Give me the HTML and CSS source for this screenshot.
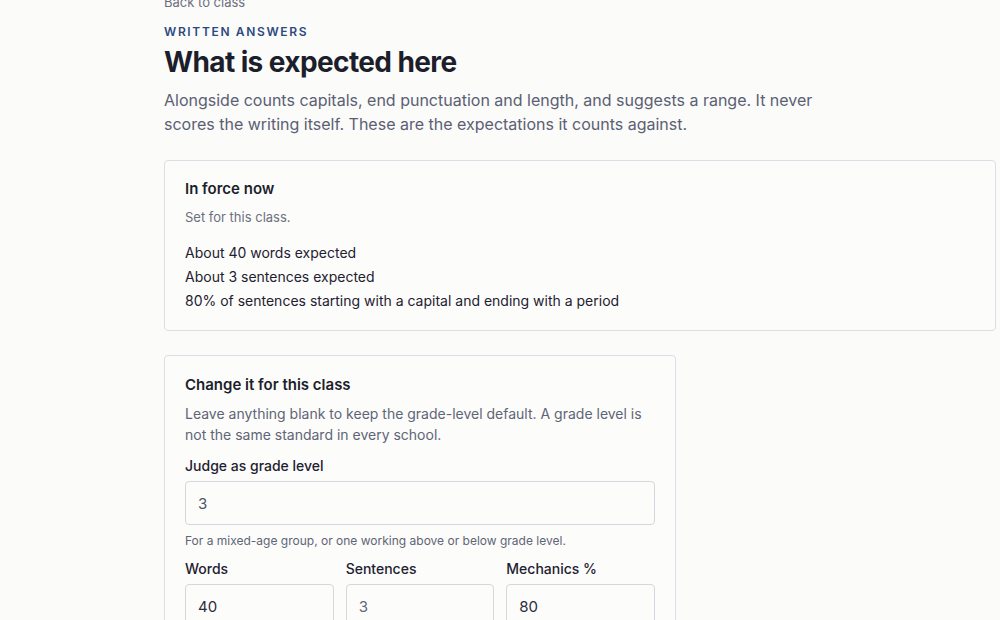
FILE: index.html
```html
<!DOCTYPE html>
<html lang="en">
<head>
<meta charset="utf-8">
<title>What is expected here</title>
<link rel="stylesheet" href="styles.css">
</head>
<body>
<main class="page">
  <a class="back" href="#">Back to class</a>
  <p class="eyebrow">WRITTEN ANSWERS</p>
  <h1 class="title">What is expected here</h1>
  <p class="lead">Alongside counts capitals, end punctuation and length, and suggests a range. It never scores the writing itself. These are the expectations it counts against.</p>

  <section class="card card-wide">
    <h2 class="card-title">In force now</h2>
    <p class="card-sub">Set for this class.</p>
    <ul class="rules">
      <li>About 40 words expected</li>
      <li>About 3 sentences expected</li>
      <li>80% of sentences starting with a capital and ending with a period</li>
    </ul>
  </section>

  <section class="card card-form">
    <h2 class="card-title">Change it for this class</h2>
    <p class="card-desc">Leave anything blank to keep the grade-level default. A grade level is not the same standard in every school.</p>
    <div class="field">
      <label class="label" for="grade">Judge as grade level</label>
      <input class="input input-muted" id="grade" type="text" value="3">
      <p class="help">For a mixed-age group, or one working above or below grade level.</p>
    </div>
    <div class="field-row">
      <div class="field-col">
        <label class="label" for="words">Words</label>
        <input class="input" id="words" type="text" value="40">
      </div>
      <div class="field-col">
        <label class="label" for="sentences">Sentences</label>
        <input class="input" id="sentences" type="text" placeholder="3">
      </div>
      <div class="field-col">
        <label class="label" for="mech">Mechanics %</label>
        <input class="input" id="mech" type="text" value="80">
      </div>
    </div>
  </section>
</main>
</body>
</html>
```

FILE: styles.css
```css
* { box-sizing: border-box; }
html, body {
  margin: 0;
  padding: 0;
  background: #fbfbfa;
  font-family: Inter, "Liberation Sans", sans-serif;
  color: #1e2130;
}
.page {
  margin: -8px 0 0 164px;
  width: 832px;
  padding-bottom: 40px;
}
.back {
  display: block;
  font-size: 13px;
  line-height: 20px;
  color: #6b7080;
  text-decoration: none;
}
.eyebrow {
  margin: 12px 0 0;
  font-size: 12px;
  line-height: 16px;
  font-weight: 600;
  letter-spacing: 1.65px;
  color: #2c4a7e;
}
.title {
  margin: 4px 0 0;
  font-size: 28px;
  line-height: 36px;
  font-weight: 700;
  letter-spacing: -0.6px;
  color: #1c1f2b;
}
.lead {
  margin: 8px 0 0;
  max-width: 660px;
  font-size: 16px;
  line-height: 24px;
  color: #5a6072;
}
.card {
  margin-top: 24px;
  border: 1px solid #dedde6;
  border-radius: 4px;
  background: #fcfcfb;
  padding: 18px 20px 17px;
}
.card-form {
  width: 512px;
  padding-top: 19px;
}
.card-title {
  margin: 0;
  font-size: 15px;
  line-height: 20px;
  font-weight: 600;
  color: #1c1f2b;
}
.card-sub {
  margin: 8px 0 0;
  font-size: 13px;
  line-height: 20px;
  color: #6b7080;
}
.rules {
  list-style: none;
  margin: 14px 0 0;
  padding: 0;
  font-size: 14px;
  line-height: 24px;
  color: #1e2130;
}
.card-desc {
  margin: 8px 0 0;
  font-size: 14px;
  line-height: 21px;
  color: #5f6576;
}
.field {
  margin-top: 11px;
}
.label {
  display: block;
  font-size: 14px;
  line-height: 20px;
  font-weight: 500;
  color: #1e2130;
}
.input {
  display: block;
  width: 100%;
  height: 44px;
  margin-top: 5px;
  padding: 0 12px;
  border: 1px solid #d5d7de;
  border-radius: 4px;
  background: #fcfcfb;
  font-family: inherit;
  font-size: 15px;
  color: #2a2d3a;
  outline: none;
}
.input-muted { color: #4f5565; }
.input::placeholder { color: #626878; opacity: 1; }
.help {
  margin: 8px 0 0;
  font-size: 12px;
  line-height: 16px;
  color: #5f6576;
}
.field-row {
  margin-top: 10px;
  display: grid;
  grid-template-columns: repeat(3, 1fr);
  gap: 12px;
}
```
